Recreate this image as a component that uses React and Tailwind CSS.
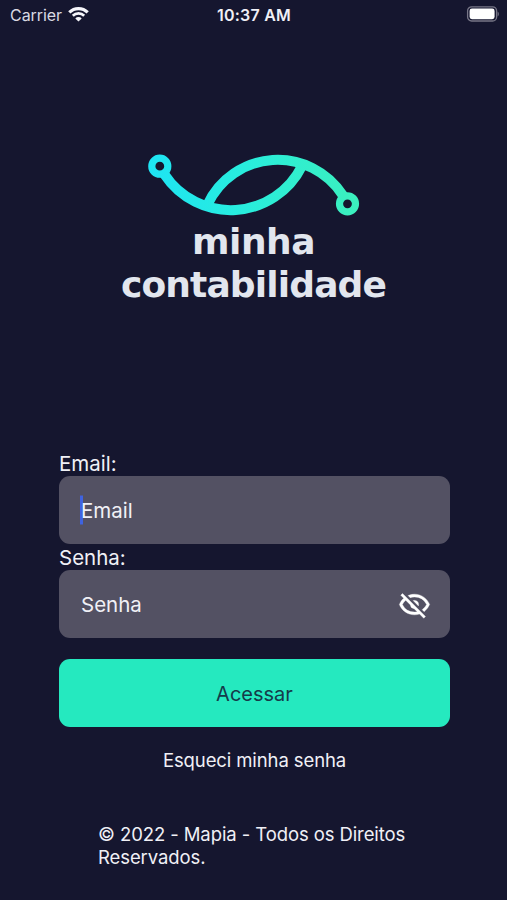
import React from 'react';

const StatusBar = () => (
  <header className="grid h-[30px] grid-cols-3 items-center pl-[10px] pr-[8px] text-[16px] leading-none">
    <div className="-mt-px flex items-center gap-[6px]">
      <span className="tracking-[-0.05px] text-[#d9d9e3]">Carrier</span>
      <svg width="21" height="15" viewBox="0 0 21 15" fill="none" stroke="#f5f5fa">
        <path d="M1.3 5.4a13 13 0 0 1 18.4 0" strokeWidth="3.1" />
        <path d="M4.8 8.8a8.1 8.1 0 0 1 11.4 0" strokeWidth="2.7" />
        <path d="M10.5 14.6L7.3 11.4a4.6 4.6 0 0 1 6.4 0z" fill="#f5f5fa" stroke="none" />
      </svg>
    </div>
    <span className="-ml-px -mt-px whitespace-nowrap text-center font-semibold tracking-[0.25px] text-[#f0f0f6]">10:37 AM</span>
    <div className="-mt-[2px] flex justify-end">
      <svg width="33" height="16" viewBox="0 0 33 16">
        <rect x="1.6" y="0.8" width="29" height="14.2" rx="4" fill="none" stroke="#777687" strokeWidth="1.3" />
        <rect x="3.6" y="2.6" width="25" height="10.6" rx="2.4" fill="#ffffff" />
        <path d="M31.6 5.5c1.6 1 1.6 4 0 5z" fill="#777687" />
      </svg>
    </div>
  </header>
);

const Logo = () => (
  <div className="flex flex-col items-center">
    <svg width="212" height="64" viewBox="148 153 212 64" fill="none" stroke="url(#logo)">
      <defs>
        <linearGradient id="logo" gradientUnits="userSpaceOnUse" x1="148" y1="0" x2="360" y2="0">
          <stop offset="0" stopColor="#1ee4f4" />
          <stop offset="0.45" stopColor="#28eddd" />
          <stop offset="1" stopColor="#3cf0bd" />
        </linearGradient>
      </defs>
      <circle cx="159.8" cy="166.2" r="8" strokeWidth="7.2" />
      <circle cx="347.5" cy="203.8" r="8" strokeWidth="7.2" />
      <path d="M164.5 174.5A79.5 79.5 0 0 0 302 166" strokeWidth="10" />
      <path d="M207.5 204.5A77.5 77.5 0 0 1 343 195.5" strokeWidth="10" />
    </svg>
    <h1 className="mt-[3px] text-center font-['DejaVu_Sans'] text-[36px] font-bold leading-[43px] text-[#e2e6ee]">
      <span className="tracking-[-0.5px]">minha</span>
      <br />
      <span className="tracking-[-0.85px]">contabilidade</span>
    </h1>
  </div>
);

const EyeOff = () => (
  <svg width="33" height="33" viewBox="0 0 24 24" fill="#ffffff" stroke="#ffffff" strokeWidth="0.25">
    <path d="M2 5.27L3.28 4L20 20.72L18.73 22l-3.08-3.08c-1.15.38-2.37.58-3.65.58c-5 0-9.27-3.11-11-7.5c.69-1.76 1.79-3.31 3.19-4.54L2 5.27M12 9a3 3 0 0 1 3 3a3 3 0 0 1-.17 1L11 9.17A3 3 0 0 1 12 9m0-4.5c5 0 9.27 3.11 11 7.5a11.79 11.79 0 0 1-4 5.19l-1.42-1.43A9.862 9.862 0 0 0 20.82 12A9.821 9.821 0 0 0 12 6.5c-1.09 0-2.16.18-3.16.5L7.3 5.47c1.44-.62 3.03-.97 4.7-.97M3.18 12A9.821 9.821 0 0 0 12 17.5c.69 0 1.37-.07 2-.21L11.72 15A3.064 3.064 0 0 1 9 12.28L5.6 8.87c-.99.85-1.82 1.91-2.42 3.13z" />
  </svg>
);

const Field = ({ label, focused = false, children }) => (
  <div>
    <div className="h-[26px] text-[20.5px] leading-[27px]">{label}:</div>
    <div className="flex h-[68px] items-center justify-between rounded-[11px] bg-[#535163] pl-[22px] pr-[19px] text-[20.5px]">
      <span className="relative pt-[2px]">
        {focused && <span className="absolute -left-px top-1/2 h-[29px] w-[3px] -translate-y-1/2 bg-[#3f63e0]" />}
        <span className="relative">{label}</span>
      </span>
      {children}
    </div>
  </div>
);

const App = () => (
  <div className="flex h-[900px] w-[507px] flex-col overflow-hidden bg-[#15162f] font-['Inter',sans-serif] text-[#f0f0f6]">
    <StatusBar />

    <div className="mt-[123px] h-[297px]">
      <Logo />
    </div>

    <main className="ml-[59px] w-[391px]">
      <Field label="Email" focused />
      <Field label="Senha">
        <EyeOff />
      </Field>

      {/* Login */}
      <button className="mt-[21px] block h-[68px] w-full rounded-[11px] bg-[#25e9bf] pt-px text-[20px] text-[#153a4a]">
        Acessar
      </button>
      <a className="mt-[19px] block text-center text-[18.5px] leading-[28px] tracking-[-0.1px]">Esqueci minha senha</a>
    </main>

    <footer className="ml-[98px] mt-[49px] whitespace-nowrap text-[18.5px] leading-[23px] tracking-[-0.09px]">
      © 2022 - Mapia - Todos os Direitos
      <br />
      Reservados.
    </footer>
  </div>
);

export default App;
